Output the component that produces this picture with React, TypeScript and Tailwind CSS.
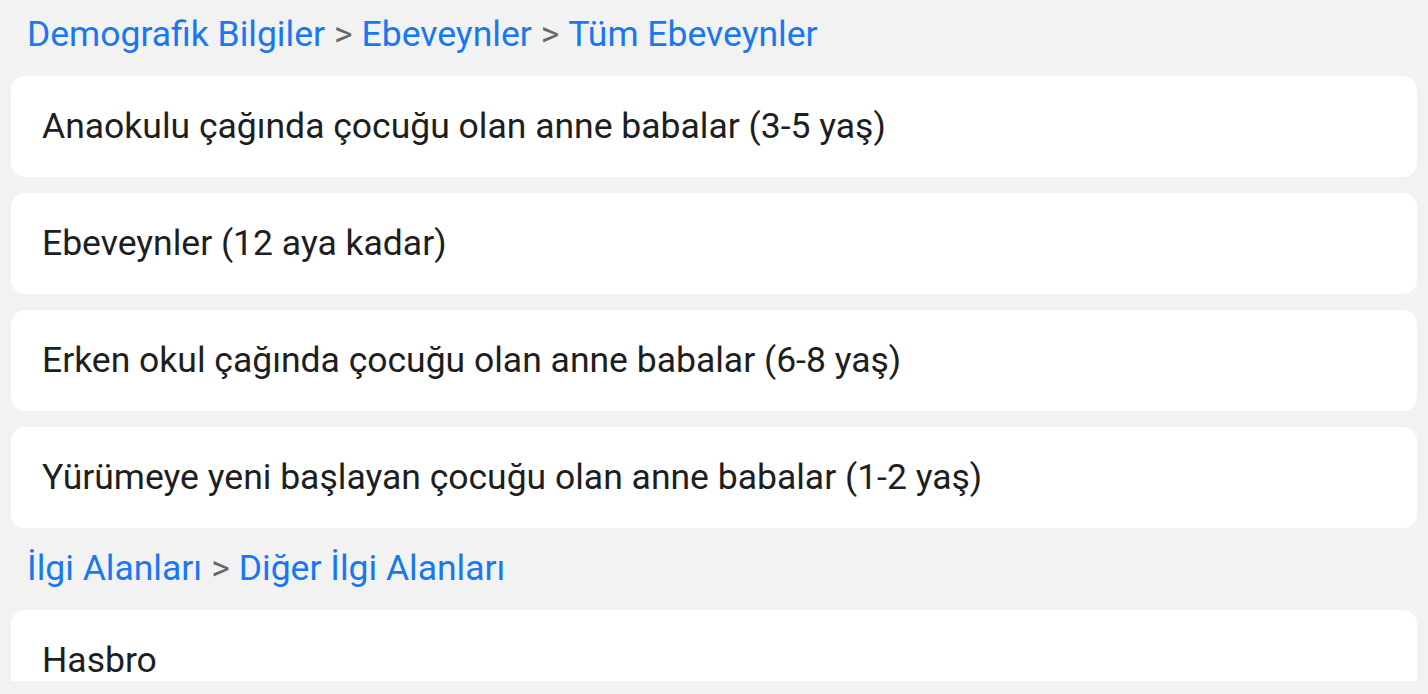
const groups = [
  {
    path: ["Demografik Bilgiler", "Ebeveynler", "Tüm Ebeveynler"],
    items: [
      "Anaokulu çağında çocuğu olan anne babalar (3-5 yaş)",
      "Ebeveynler (12 aya kadar)",
      "Erken okul çağında çocuğu olan anne babalar (6-8 yaş)",
      "Yürümeye yeni başlayan çocuğu olan anne babalar (1-2 yaş)",
    ],
  },
  {
    path: ["İlgi Alanları", "Diğer İlgi Alanları"],
    items: ["Hasbro"],
  },
];

const Breadcrumb = ({ path }: { path: string[] }) => (
  <div className="h-[50px] flex items-center px-4 text-[35.5px] leading-none">
    {path.map((p, i) => (
      <span key={p} className="flex items-center">
        {i > 0 && <span className="text-[#65676b] px-[9px]">&gt;</span>}
        <span className="text-[#1877f2]">{p}</span>
      </span>
    ))}
  </div>
);

export default function App() {
  return (
    <div className="min-h-screen bg-[#f2f2f2]">
      <div
        className="h-[681px] overflow-hidden flex flex-col gap-4 pt-[10px] px-[11px]"
        style={{ fontFamily: "Roboto, 'Noto Sans', sans-serif" }}
      >
        {groups.map((g) => (
          <div key={g.path[0]} className="flex flex-col gap-4">
            <Breadcrumb path={g.path} />
            {g.items.map((item) => (
              <div
                key={item}
                className="h-[101px] shrink-0 bg-white rounded-[14px] flex items-center px-[31px] text-[35.5px] text-[#1c1e21]"
              >
                {item}
              </div>
            ))}
          </div>
        ))}
      </div>
    </div>
  );
}
